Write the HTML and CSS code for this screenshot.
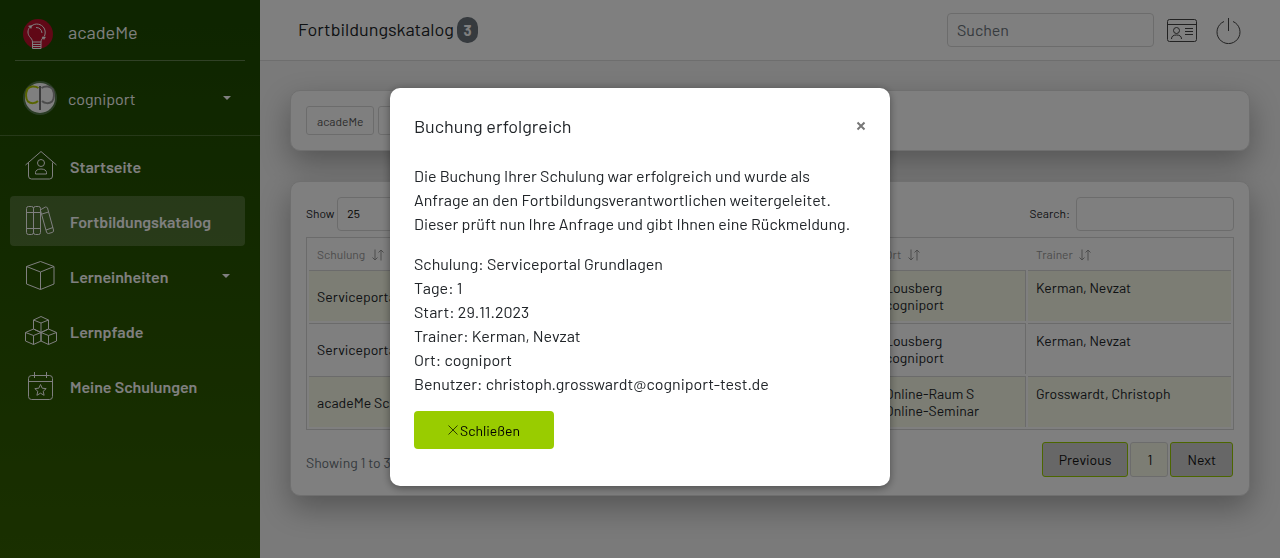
FILE: index.html
```html
<!DOCTYPE html>
<html lang="de">
<head>
    <meta charset="UTF-8">
    <meta name="viewport" content="width=device-width, initial-scale=1.0">
    <title>Fortbildungskatalog</title>
    <link rel="stylesheet" href="styles.css">
</head>
<body>
    <!-- Shared icons -->
    <svg class="sprite" aria-hidden="true">
        <symbol id="icon-sort" viewBox="0 0 12 12">
            <path d="M3 .5v10.500M.5 8.500L3 11l2.500-2.500M9 11.500V1M6.500 3.500L9 1l2.500 2.500"/>
        </symbol>
    </svg>

    <div class="app">
        <aside class="sidebar">
            <a class="brand" href="#">
                <svg class="brand-logo" viewBox="0 0 30 30">
                    <circle cx="15" cy="15" r="15" fill="#c0102c"/>
                    <g fill="none" stroke="#fff" stroke-width="1">
                        <path d="M6.500 8.500C4.500 11 4.500 15 6.500 17.500c1.500 2 3 3 3 5.500h8.500c0-2.500 1.500-3.500 3-5.500M8.500 7c4-3.500 10-2 12.500 2 1.500 2.500 1.500 5.500.5 8"/>
                        <path d="M13 8.500c3.500 0 5.500 2 6 5.500"/>
                        <path d="M9.500 25.500h8.500M9.500 27.500h8.500M9.500 23v6.500M18 23v6.500M9.500 29.500h8.500"/>
                        <path d="M5.500 7l3.500-.5L8 9.500zM19 18h3.500l-1.500 2.500z" fill="#fff" stroke-width=".5"/>
                    </g>
                </svg>
                <span>acadeMe</span>
            </a>
            <div class="user">
                <svg class="avatar" viewBox="0 0 34 34">
                    <circle cx="17" cy="17" r="17" fill="#557a4a"/>
                    <circle cx="17" cy="17" r="15" fill="#fff"/>
                    <g fill="none" stroke-width="2">
                        <path d="M15.500 7C12 4.500 6.500 5 4.500 8c-2 4-2 10 .5 12.500 3 2.500 7.500 2 10-.5" stroke="#b0c800"/>
                        <path d="M18.500 7C22 4.500 27.500 5 29.500 8c2 4 2 10-.5 12.500-3 2.500-7.500 2-10-.5" stroke="#999"/>
                        <path d="M17 5v24" stroke="#777"/>
                    </g>
                </svg>
                <span>cogniport</span>
                <i class="caret"></i>
            </div>
            <nav class="nav">
                <a class="nav-item" href="#">
                    <svg viewBox="0 0 32 32">
                        <path d="M.5 15L16 1.500 31.500 15M3.500 12.500V26a3 3 0 0 0 3 3h18a3 3 0 0 0 3-3V12.500"/>
                        <circle cx="16" cy="13" r="3.500"/>
                        <path d="M10.500 24v-1.500c0-2 2-3.500 5.500-3.500s5.500 1.500 5.500 3.500V24z"/>
                    </svg>
                    <span>Startseite</span>
                </a>
                <a class="nav-item active" href="#">
                    <svg viewBox="0 0 32 32">
                        <rect x="1.500" y="1.500" width="7" height="28" rx="2"/>
                        <rect x="8.500" y="1.500" width="7" height="28" rx="2"/>
                        <path d="M1.500 7.500h14M1.500 23.500h14M16 4.500l4.500-2.500a2 2 0 0 1 2 1l6 22a2 2 0 0 1-1.500 2.500l-3.500 1a2 2 0 0 1-2-1.500L15.500 5.500M17 9l6.500-2M21 25l7-2.500"/>
                    </svg>
                    <span>Fortbildungskatalog</span>
                </a>
                <a class="nav-item" href="#">
                    <svg viewBox="0 0 32 32">
                        <path d="M1.500 6.500L15.500 1.500l13.500 5v17.500l-13.500 5.500-14-5.500zM1.500 6.500l14 5.500L29 6.500M15.500 12v17.500"/>
                    </svg>
                    <span>Lerneinheiten</span>
                    <i class="caret"></i>
                </a>
                <a class="nav-item" href="#">
                    <svg viewBox="0 0 32 32">
                        <path d="M8.500 5l7.500-3.500L23.500 5v9L16 17.500 8.500 14zM8.500 5L16 8l7.500-3M16 8v9.500"/>
                        <path d="M.5 17.500l8-3.500 7.500 3.500V26l-7.500 3.500L.5 26zM.5 17.500l8 3 7.500-3M8.500 20.500v9"/>
                        <path d="M16 17.500l7.500-3.500 8 3.500V26l-8 3.500L16 26zM16 17.500l7.500 3 8-3M23.500 20.500v9"/>
                    </svg>
                    <span>Lernpfade</span>
                </a>
                <a class="nav-item" href="#">
                    <svg viewBox="0 0 32 32">
                        <rect x="3.500" y="5.500" width="24" height="24" rx="3"/>
                        <path d="M3.500 11.500h24M9.500 2v6M21.500 2v6M15.500 14.500l1.700 3.700 4 .4-3 2.700.9 4-3.600-2.100-3.600 2.100.9-4-3-2.700 4-.4z"/>
                    </svg>
                    <span>Meine Schulungen</span>
                </a>
            </nav>
        </aside>

        <main class="main">
            <header class="topbar">
                <h1 class="page-title">Fortbildungskatalog <span class="badge">3</span></h1>
                <input class="field top-search" type="search" placeholder="Suchen" aria-label="Suchen">
                <a class="top-icon" href="#" aria-label="Profil">
                    <svg width="30" height="24" viewBox="0 0 30 24">
                        <rect x=".5" y="1.500" width="29" height="22" rx="2"/>
                        <path d="M.5 6.500h29M18 10.500h8M18 13.500h8M18 16.500h8M4.500 21c0-3 2-4 5-4s5 1 5 4"/>
                        <circle cx="9.500" cy="12.500" r="3"/>
                    </svg>
                </a>
                <a class="top-icon" href="#" aria-label="Abmelden">
                    <svg width="26" height="28" viewBox="0 0 26 28">
                        <path d="M13.500 2v13M9 5.500a11.500 11.500 0 1 0 9 0"/>
                    </svg>
                </a>
            </header>

            <div class="content">
                <section class="card filters">
                    <button class="filter" type="button">acadeMe</button>
                    <button class="filter" type="button">Lernen</button>
                </section>

                <section class="card">
                    <div class="table-tools">
                        <label for="pageLength">Show</label>
                        <select class="field length" id="pageLength">
                            <option>25</option>
                        </select>
                        <label class="search-label" for="tableSearch">Search:</label>
                        <input class="field table-search" type="search" id="tableSearch">
                    </div>
                    <table class="courses">
                        <colgroup>
                            <col>
                            <col class="col-place">
                            <col class="col-trainer">
                        </colgroup>
                        <thead>
                            <tr>
                                <th>Schulung <svg class="sort"><use href="#icon-sort"/></svg></th>
                                <th>Ort <svg class="sort"><use href="#icon-sort"/></svg></th>
                                <th>Trainer <svg class="sort"><use href="#icon-sort"/></svg></th>
                            </tr>
                        </thead>
                        <tbody>
                            <tr>
                                <td class="name">Serviceportal</td>
                                <td>Lousberg<br>cogniport</td>
                                <td>Kerman, Nevzat</td>
                            </tr>
                            <tr>
                                <td class="name">Serviceportal</td>
                                <td>Lousberg<br>cogniport</td>
                                <td>Kerman, Nevzat</td>
                            </tr>
                            <tr>
                                <td class="name">acadeMe Schulung</td>
                                <td>Online-Raum S<br>Online-Seminar</td>
                                <td>Grosswardt, Christoph</td>
                            </tr>
                        </tbody>
                    </table>
                    <div class="table-footer">
                        <span class="info">Showing 1 to 3 of 3 entries</span>
                        <button class="page" type="button">Previous</button>
                        <button class="page current" type="button">1</button>
                        <button class="page" type="button">Next</button>
                    </div>
                </section>
            </div>
        </main>
    </div>

    <div class="backdrop">
        <div class="modal" role="dialog" aria-modal="true" aria-labelledby="modalTitle">
            <div class="modal-header">
                <h2 class="modal-title" id="modalTitle">Buchung erfolgreich</h2>
                <button class="modal-close" type="button" aria-label="Schließen">
                    <svg width="10" height="10" viewBox="0 0 10 10"><path d="M1.500 1.500l7 7M8.500 1.500l-7 7"/></svg>
                </button>
            </div>
            <p>Die Buchung Ihrer Schulung war erfolgreich und wurde als<br>
                Anfrage an den Fortbildungsverantwortlichen weitergeleitet.<br>
                Dieser prüft nun Ihre Anfrage und gibt Ihnen eine Rückmeldung.</p>
            <p>Schulung: Serviceportal Grundlagen<br>
                Tage: 1<br>
                Start: 29.11.2023<br>
                Trainer: Kerman, Nevzat<br>
                Ort: cogniport<br>
                Benutzer: christoph.grosswardt@cogniport-test.de</p>
            <button class="btn-close" type="button">
                <svg width="10" height="10" viewBox="0 0 10 10"><path d="M.5 .5l9 9M9.500 .5l-9 9"/></svg>
                Schließen
            </button>
        </div>
    </div>
</body>
</html>
```
FILE: styles.css
```css
* {
    box-sizing: border-box;
}
body {
    margin: 0;
    font-family: Barlow, Roboto, sans-serif;
    font-size: 16px;
    line-height: 24px;
    color: #212529;
    background-color: #f4f4f4;
}
button,
input,
select {
    font-family: inherit;
}
a {
    color: inherit;
    text-decoration: none;
}
svg {
    fill: none;
    stroke: currentColor;
    flex: none;
}
.sprite {
    display: none;
}
.app {
    display: flex;
    min-height: 100vh;
}

/* Sidebar */
.sidebar {
    width: 260px;
    flex: none;
    color: #fff;
    background: linear-gradient(#1c4a00, #346000);
}
.brand {
    display: flex;
    align-items: center;
    gap: 15px;
    height: 61px;
    margin: 0 15px;
    padding: 8px 8px 0;
    font-size: 18px;
    border-bottom: 1px solid rgba(255, 255, 255, 0.3);
}
.brand span {
    padding-bottom: 4px;
}
.brand-logo {
    width: 30px;
    height: 30px;
    stroke: none;
}
.user {
    display: flex;
    align-items: center;
    gap: 11px;
    height: 75px;
    padding: 0 29px 0 23px;
    border-bottom: 1px solid rgba(255, 255, 255, 0.2);
}
.user span,
.nav-item span {
    padding-top: 2px;
}
.avatar {
    width: 34px;
    height: 34px;
    stroke: none;
}
.caret {
    margin-left: auto;
    border: 4px solid transparent;
    border-top-color: #fff;
    border-bottom: 0;
}
.nav {
    display: flex;
    flex-direction: column;
    gap: 5px;
    padding: 5px 15px 5px 10px;
}
.nav-item {
    display: flex;
    align-items: center;
    gap: 13px;
    height: 50px;
    padding: 0 15px;
    font-weight: 600;
    border-radius: 4px;
}
.nav-item svg {
    width: 32px;
    height: 32px;
}
.nav-item.active {
    background-color: rgba(255, 255, 255, 0.2);
}

/* Top bar */
.main {
    flex: 1;
    min-width: 0;
}
.topbar {
    display: flex;
    align-items: center;
    height: 61px;
    padding: 0 39px 0 38px;
    background-color: #fff;
    border-bottom: 1px solid #ddd;
}
.page-title {
    margin: 0 auto 0 0;
    font-size: 18px;
    font-weight: 400;
}
.badge {
    display: inline-block;
    padding: 1px 6px;
    font-size: 15px;
    font-weight: 700;
    color: #fff;
    background-color: #6c757d;
    border-radius: 10px;
}
.field {
    height: 34px;
    padding: 0 9px 2px;
    color: #212529;
    background-color: #fff;
    border: 1px solid #d9d9d9;
    border-radius: 4px;
}
.top-search {
    width: 207px;
    font-size: 16px;
}
.top-search::placeholder {
    color: #6c757d;
}
.top-icon {
    display: flex;
    margin-left: 13px;
    color: #444;
}
.top-icon + .top-icon {
    margin-left: 18px;
}

/* Cards */
.content {
    display: flex;
    flex-direction: column;
    gap: 30px;
    padding: 29px 30px;
}
.card {
    padding: 15px;
    background-color: #fff;
    border: 1px solid #dedede;
    border-radius: 10px;
    box-shadow: 0 12px 30px rgba(0, 0, 0, 0.3);
}
.filters {
    display: flex;
    gap: 4px;
}
.filter {
    height: 29px;
    padding: 0 10px;
    font-size: 12px;
    color: #555;
    background-color: #fff;
    border: 1px solid #d9d9d9;
    border-radius: 3px;
}

/* Course table */
.table-tools {
    display: flex;
    align-items: center;
    gap: 3px;
    margin-bottom: 6px;
    font-size: 12px;
}
.table-tools label {
    padding-bottom: 2px;
}
.length {
    width: 70px;
    font-size: 12px;
    color: #000;
    appearance: none;
}
.search-label {
    margin-left: auto;
}
.table-search {
    width: 158px;
    margin-left: 3px;
}
.courses {
    width: 100%;
    table-layout: fixed;
    border: 1px solid #d6d6d6;
    border-collapse: separate;
    border-spacing: 2px;
    font-size: 14px;
    line-height: 17px;
}
.col-place {
    width: 149px;
}
.col-trainer {
    width: 203px;
}
.courses th {
    height: 28px;
    padding: 0 8px;
    font-size: 12px;
    font-weight: 400;
    text-align: left;
    color: #999;
}
.courses td {
    padding: 8px;
    vertical-align: top;
    border-top: 1px solid #d6d6d6;
    border-right: 1px solid #d6d6d6;
}
.courses td:last-child {
    border-right: 0;
}
.courses .name {
    vertical-align: middle;
}
.courses tbody tr:nth-child(odd) {
    background-color: #f8fae8;
}
.sort {
    width: 12px;
    height: 12px;
    margin-left: 4px;
    vertical-align: middle;
}
.table-footer {
    display: flex;
    align-items: center;
    gap: 2px;
    margin: 12px 0 3px;
    padding-right: 1px;
    font-size: 14px;
}
.info {
    margin-right: auto;
    padding-top: 6px;
    color: #6c757d;
}
.page {
    height: 35px;
    padding: 0 16px;
    font-size: 14px;
    color: #111;
    background-color: #cfcfcf;
    border: 1px solid #9c0;
    border-radius: 3px;
}
.page.current {
    width: 38px;
    background-color: #f8fae8;
    border-color: #d9d9d9;
}

/* Modal */
.backdrop {
    position: fixed;
    inset: 0;
    padding: 88px 16px;
    overflow: auto;
    background-color: rgba(0, 0, 0, 0.5);
}
.modal {
    max-width: 500px;
    margin: 0 auto;
    padding: 23px 24px 37px;
    background-color: #fff;
    border-radius: 10px;
    box-shadow: 0 2px 8px rgba(0, 0, 0, 0.4);
}
.modal-header {
    display: flex;
    align-items: center;
    justify-content: space-between;
    height: 29px;
    margin-bottom: 24px;
}
.modal-title {
    margin: 0;
    font-size: 18px;
    font-weight: 400;
}
.modal-close {
    display: flex;
    padding: 0;
    color: #777;
    background: none;
    border: 0;
    cursor: pointer;
}
.modal-close path {
    stroke-width: 2;
}
.modal p {
    margin: 0 0 16px;
}
.modal p:last-of-type {
    margin-bottom: 15px;
}
.btn-close {
    display: flex;
    align-items: center;
    justify-content: center;
    gap: 2px;
    width: 140px;
    height: 38px;
    font-size: 14px;
    color: #000;
    background-color: #9c0;
    border: 0;
    border-radius: 4px;
    cursor: pointer;
}
.btn-close svg {
    opacity: 0.7;
}
```
